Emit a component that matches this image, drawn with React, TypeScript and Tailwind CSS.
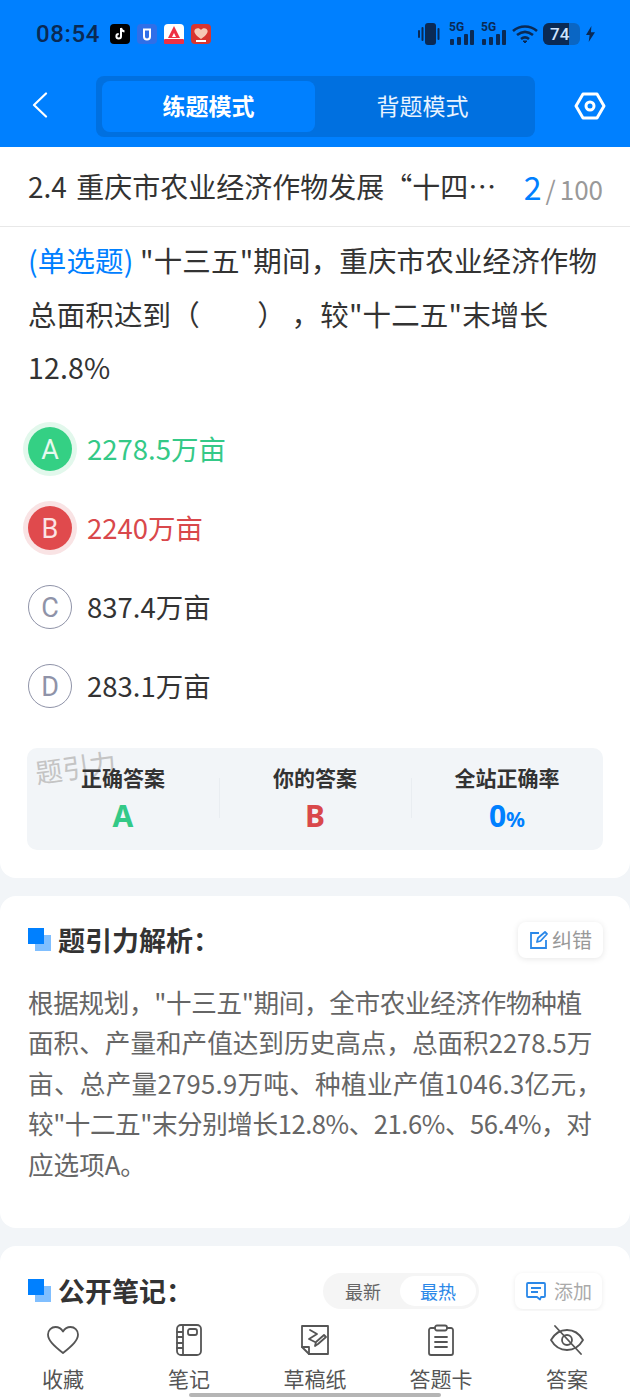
import React from "react";

function Signal() {
  return (
    <div className="relative h-[21px] w-[26px]">
      <span className="absolute left-[1px] top-[-3px] font-['Roboto'] text-[12px] leading-[12px] font-bold text-[#0a2a55]">5G</span>
      <svg viewBox="0 0 26 21" className="absolute inset-0 h-[21px] w-[26px]" fill="#0a2a55">
        <rect x="2" y="15" width="4" height="6" rx="1" />
        <rect x="9" y="13" width="4" height="8" rx="1" />
        <rect x="16" y="10" width="4" height="11" rx="1" />
        <rect x="22" y="6" width="4" height="15" rx="1" />
      </svg>
    </div>
  );
}

function StatusBar() {
  return (
    <div className="flex h-[68px] items-center justify-between pl-[36px] pr-[35px]">
      <div className="flex items-center">
        <span className="font-['Roboto'] text-[24px] leading-none font-medium tracking-[0.6px] text-[#0a2a55]">08:54</span>
        <div className="ml-[10px] flex items-center gap-[7px]">
          <svg viewBox="0 0 20 20" className="h-[20px] w-[20px]">
            <rect width="20" height="20" rx="4" fill="#000" />
            <path d="M11 4v8.200a2.300 2.300 0 1 1-2.300-2.300M11 4c.3 2 1.600 3.200 3.500 3.400" fill="none" stroke="#fff" strokeWidth="2" />
          </svg>
          <svg viewBox="0 0 20 20" className="h-[20px] w-[20px]">
            <rect width="20" height="20" rx="4" fill="#2f6fe8" />
            <path d="M6 5.500h8M7 6v6.500a3 3 0 0 0 6 0V6" fill="none" stroke="#fff" strokeWidth="2" />
          </svg>
          <svg viewBox="0 0 20 20" className="h-[20px] w-[20px]">
            <rect width="20" height="20" rx="4" fill="#fff" />
            <path d="M10 2l6 12H4z" fill="#ee3044" />
            <path d="M10 9l2 4H8z" fill="#fff" />
            <rect y="15" width="20" height="5" rx="1" fill="#ee3044" />
          </svg>
          <svg viewBox="0 0 20 20" className="h-[20px] w-[20px]">
            <rect width="20" height="20" rx="4" fill="#d8352f" />
            <path d="M10 15C4 11 3 8 3.500 6.500 4.500 3.500 8.500 3.500 10 6c1.500-2.500 5.500-2.500 6.500.5C17 8 16 11 10 15z" fill="#f6c9b5" />
            <rect x="5" y="16" width="10" height="2" fill="#fff" />
          </svg>
        </div>
      </div>
      <div className="flex items-center">
        <svg viewBox="0 0 26 24" className="h-[24px] w-[26px]" fill="#0a2a55">
          <rect x="8" y="1" width="11" height="22" rx="3" />
          <rect x="1" y="8" width="2" height="8" rx="1" />
          <rect x="4.500" y="5" width="2" height="14" rx="1" />
          <rect x="20.500" y="6" width="2" height="12" rx="1" />
        </svg>
        <div className="ml-[5px] flex gap-[6px]">
          <Signal />
          <Signal />
        </div>
        <svg viewBox="0 0 26 20" className="ml-[6px] h-[20px] w-[26px]" fill="none" stroke="#0a2a55" strokeWidth="2.600">
          <path d="M1 7c7-6 17-6 24 0" />
          <path d="M5 11c5-4 11-4 16 0" />
          <path d="M9 15c2.500-2 5.500-2 8 0" />
          <path d="M11 17l2 2 2-2z" fill="#0a2a55" strokeWidth="1" />
        </svg>
        <div className="relative ml-[5px] flex h-[22px] w-[37px] items-center overflow-hidden rounded-[6px] bg-[#0a66c4]">
          <div className="absolute inset-y-0 left-0 w-[26px] bg-[#0a2a55]" />
          <span className="relative ml-[7px] font-['Roboto'] text-[17px] leading-none font-medium text-[#cfe4ff]">74</span>
        </div>
        <svg viewBox="0 0 10 18" className="ml-[6px] h-[18px] w-[9px]" fill="#0a2a55">
          <path d="M6 0L0 10h4l-1 8 7-11H5.500z" />
        </svg>
      </div>
    </div>
  );
}

function Header() {
  return (
    <div className="bg-[#0080ff]">
      <StatusBar />
      <div className="flex h-[79px] items-start">
        <div className="flex w-[96px] justify-start pl-[32px] pt-[24px]">
          <svg viewBox="0 0 16 26" className="h-[26px] w-[16px]" fill="none" stroke="#fff" strokeWidth="2.200" strokeLinecap="round" strokeLinejoin="round">
            <path d="M14 1.500L2 13l12 11.500" />
          </svg>
        </div>
        <div className="mt-[8px] flex h-[61px] w-[439px] rounded-[8px] bg-[#0070e0] p-[5px] pl-[6px]">
          <div className="flex w-[213px] items-center justify-center rounded-[8px] bg-[#0080ff] pb-[3px] text-[23px] font-bold text-white">练题模式</div>
          <div className="flex flex-1 items-center justify-center pb-[3px] text-[23px] text-[#e8f3ff]">背题模式</div>
        </div>
        <div className="flex flex-1 justify-end pt-[24px] pr-[24px]">
          <svg viewBox="0 0 32 28" className="h-[28px] w-[32px]" fill="none" stroke="#fff" strokeWidth="3" strokeLinejoin="round">
            <path d="M9 2h14l7 12-7 12H9L2 14z" />
            <circle cx="16" cy="14" r="4" />
          </svg>
        </div>
      </div>
    </div>
  );
}

function Option({ letter, text, state }: { letter: string; text: string; state: "right" | "wrong" | "none" }) {
  const circle =
    state === "right"
      ? "bg-[#34d084] text-[#e6f9ef] ring-[5px] ring-[#e2f8ec] border-transparent"
      : state === "wrong"
        ? "bg-[#e04a4d] text-[#fbe4e4] ring-[5px] ring-[#f9e3e4] border-transparent"
        : "border-[#8f93a8] text-[#8f93a8]";
  const color = state === "right" ? "text-[#34c987]" : state === "wrong" ? "text-[#d9484b]" : "text-[#333333]";
  return (
    <div className="flex h-[79px] items-center pl-[28px]">
      <div className={`flex h-[44px] w-[44px] items-center justify-center rounded-full border-[1.5px] pt-[2px] font-['Roboto'] text-[27px] font-normal ${circle}`}>{letter}</div>
      <span className={`ml-[15px] text-[27.500px] leading-none ${color}`}>{text}</span>
    </div>
  );
}

function Stat({ label, children, divider }: { label: string; children: React.ReactNode; divider?: boolean }) {
  return (
    <div className="relative flex flex-1 flex-col items-center pt-[15px]">
      {divider && <div className="absolute left-0 top-[30px] h-[40px] w-px bg-[#e9edf1]" />}
      <div className="text-[21px] leading-[28px] font-bold text-[#333333]">{label}</div>
      <div className="mt-[7px] h-[36px] font-['Noto_Sans'] leading-[36px] font-bold">{children}</div>
    </div>
  );
}

function TitleMark() {
  return (
    <div className="relative h-[23px] w-[23px]">
      <div className="absolute right-0 bottom-0 h-[16px] w-[16px] bg-[#80bfff]" />
      <div className="absolute top-0 left-0 h-[16px] w-[16px] bg-[#0080ff]" />
    </div>
  );
}

function NavItem({ label, icon }: { label: string; icon: React.ReactNode }) {
  return (
    <div className="flex w-[126px] flex-col items-center">
      <div className="flex h-[34px] items-center justify-center">{icon}</div>
      <div className="mt-[7px] text-[21px] leading-[28px] text-[#555555]">{label}</div>
    </div>
  );
}

const iconStroke = { fill: "none", stroke: "#555555", strokeWidth: 1.800, strokeLinecap: "round" as const, strokeLinejoin: "round" as const };

export default function App() {
  return (
    <div className="relative h-[1400px] w-[630px] overflow-hidden bg-[#f2f5f8] font-['Noto_Sans_CJK_SC','Noto_Sans',sans-serif]">
      <Header />

      <div className="rounded-b-[16px] bg-white pb-[28px]">
        <div className="flex h-[80px] items-center justify-between border-b border-[#e8e8e8] pr-[27px] pb-[2px] pl-[28px]">
          <div className="w-[485px] truncate text-[28px] leading-[36px] text-[#333333] [word-spacing:3px]">2.4 重庆市农业经济作物发展“十四五”规划</div>
          <div className="flex items-baseline leading-none">
            <span className="text-[32px] text-[#0080ff]">2</span>
            <span className="ml-[4px] text-[26px] text-[#999999]">/</span>
            <span className="ml-[4px] text-[26px] text-[#999999]">100</span>
          </div>
        </div>

        <div className="px-[28px] pt-[6px] text-[28.500px] leading-[53.500px] tracking-[0.15px] text-[#333333]">
          <span className="text-[#0080ff]">(单选题)</span> "十三五"期间，重庆市农业经济作物总面积达到（　　）<span className="ml-[20px]">，</span>较"十二五"末增长12.8%
        </div>

        <div className="mt-[16px]">
          <Option letter="A" text="2278.5万亩" state="right" />
          <Option letter="B" text="2240万亩" state="wrong" />
          <Option letter="C" text="837.4万亩" state="none" />
          <Option letter="D" text="283.1万亩" state="none" />
        </div>

        <div className="relative mx-[27px] mt-[22px] flex h-[102px] rounded-[10px] bg-[#f2f5f8]">
          <div className="absolute top-[5px] left-[8px] -rotate-[8deg] text-[27px] leading-none text-[#c4c4c4]">题引力</div>
          <Stat label="正确答案">
            <span className="text-[30px] text-[#34c987]">A</span>
          </Stat>
          <Stat label="你的答案" divider>
            <span className="text-[30px] text-[#d9484b]">B</span>
          </Stat>
          <Stat label="全站正确率" divider>
            <span className="text-[30px] text-[#0080ff]">0</span>
            <span className="text-[21px] text-[#0080ff]">%</span>
          </Stat>
        </div>
      </div>

      <div className="mt-[18px] h-[332px] rounded-[16px] bg-white px-[28px]">
        <div className="flex items-center justify-between pt-[25px]">
          <div className="flex items-center">
            <TitleMark />
            <span className="ml-[7px] text-[27px] leading-[38px] font-bold text-[#333333]">题引力解析：</span>
          </div>
          <div className="-mr-px flex h-[36px] items-center gap-[3px] rounded-[8px] bg-white px-[11px] shadow-[0_1px_6px_rgba(0,0,0,0.1)]">
            <svg viewBox="0 0 20 20" className="h-[20px] w-[20px]" fill="none" stroke="#2b88e8" strokeWidth="1.800">
              <path d="M10 3H2v15h15v-8" />
              <path d="M8 12l1-4 7-6 2 2-6.500 7z" strokeLinejoin="round" />
            </svg>
            <span className="text-[20px] leading-none text-[#999999]">纠错</span>
          </div>
        </div>
        <div className="mt-[23px] text-[25.600px] leading-[40.500px] whitespace-nowrap text-[#666666]">
          <div className="tracking-[-0.35px]">根据规划，"十三五"期间，全市农业经济作物种植</div>
          <div>面积、产量和产值达到历史高点，总面积2278.5万</div>
          <div className="tracking-[0.3px]">亩、总产量2795.9万吨、种植业产值1046.3亿元，</div>
          <div className="tracking-[-0.45px]">较"十二五"末分别增长12.8%、21.6%、56.4%，对</div>
          <div>应选项A。</div>
        </div>
      </div>

      <div className="mt-[18px] h-[200px] rounded-t-[16px] bg-white pr-[28px] pl-[28px]">
        <div className="flex items-center justify-between pt-[26px]">
          <div className="flex items-center">
            <TitleMark />
            <span className="ml-[7px] text-[27px] leading-[38px] font-bold text-[#333333]">公开笔记：</span>
          </div>
          <div className="flex items-center">
            <div className="flex h-[36px] w-[156px] items-center rounded-full bg-[#f5f5f5] p-[3px] text-[18px] leading-none">
              <div className="flex-1 text-center text-[#666666]">最新</div>
              <div className="flex h-[30px] w-[76px] items-center justify-center rounded-full bg-white text-[#2b88e8]">最热</div>
            </div>
            <div className="ml-[36px] flex h-[36px] items-center gap-[7px] rounded-[8px] bg-white px-[10px] shadow-[0_1px_5px_rgba(0,0,0,0.08)]">
              <svg viewBox="0 0 22 20" className="h-[20px] w-[22px]" fill="none" stroke="#2b88e8" strokeWidth="1.800" strokeLinejoin="round">
                <path d="M3 2h16a1 1 0 0 1 1 1v12a1 1 0 0 1-1 1h-3l-1 2.500L12 16H3a1 1 0 0 1-1-1V3a1 1 0 0 1 1-1z" />
                <path d="M6 7h10M6 11h7" />
              </svg>
              <span className="text-[19px] leading-none text-[#aaaaaa]">添加</span>
            </div>
          </div>
        </div>
      </div>

      <div className="absolute inset-x-0 bottom-0 h-[89px] bg-white">
        <div className="flex pt-[12px]">
          <NavItem
            label="收藏"
            icon={
              <svg viewBox="0 0 34 30" className="h-[30px] w-[34px]" {...iconStroke}>
                <path d="M17 28C7 20 2 15 2 9.500 2 5 5.500 2 9.500 2c3 0 5.700 1.500 7.500 4.500C18.800 3.500 21.500 2 24.500 2 28.500 2 32 5 32 9.500 32 15 27 20 17 28z" />
              </svg>
            }
          />
          <NavItem
            label="笔记"
            icon={
              <svg viewBox="0 0 26 32" className="h-[32px] w-[26px]" {...iconStroke}>
                <rect x="1" y="1" width="24" height="30" rx="4" />
                <path d="M7 1v30M1 8h6M1 13h6M1 19h6M1 24h6" />
                <rect x="12" y="5" width="9" height="6" rx="2" />
              </svg>
            }
          />
          <NavItem
            label="草稿纸"
            icon={
              <svg viewBox="0 0 30 32" className="h-[32px] w-[30px]" {...iconStroke}>
                <path d="M2 2h26v28H9l-7-7z" />
                <path d="M2 23h7v7" />
                <path d="M10 6l7 4-8 5 6 3" />
                <path d="M15 22l1-4 8-7 2 2-8 7z" />
              </svg>
            }
          />
          <NavItem
            label="答题卡"
            icon={
              <svg viewBox="0 0 28 32" className="h-[32px] w-[28px]" {...iconStroke}>
                <path d="M8 4H4a2 2 0 0 0-2 2v23a2 2 0 0 0 2 2h20a2 2 0 0 0 2-2V6a2 2 0 0 0-2-2h-4" />
                <rect x="8" y="1.500" width="12" height="5" rx="2" />
                <path d="M8 13h12M8 18h12M8 23h12" />
              </svg>
            }
          />
          <NavItem
            label="答案"
            icon={
              <svg viewBox="0 0 34 30" className="h-[30px] w-[34px]" {...iconStroke}>
                <path d="M1 15C5 8 10 5 17 5s12 3 16 10c-4 7-9 10-16 10S5 22 1 15z" />
                <circle cx="17" cy="15" r="5" />
                <path d="M5 1l26 28" />
              </svg>
            }
          />
        </div>
        <div className="absolute bottom-[3px] left-[189px] h-[4px] w-[252px] rounded-full bg-[#b5b5b5]" />
      </div>
    </div>
  );
}
